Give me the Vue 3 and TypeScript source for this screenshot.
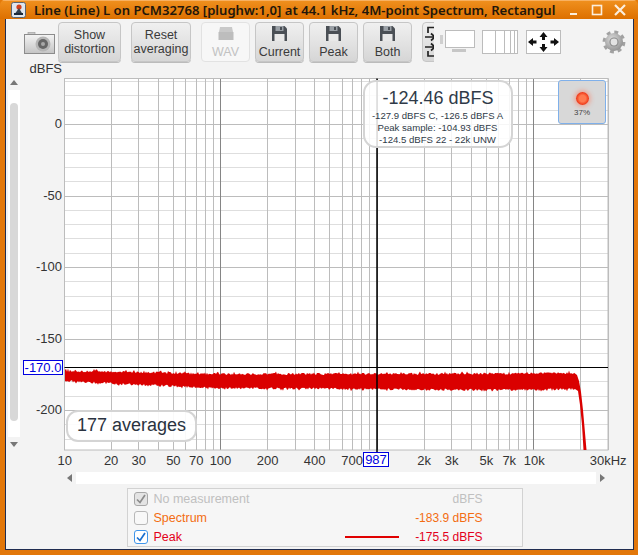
<script setup lang="ts">
const PLOT = { left: 64.5, right: 608, top: 78.5, bottom: 450 }
const X0 = 64
const DEC = 156.5
const Y0 = 124
const PXDB = 1.43
const OFF_X = 6
const OFF_Y = 62

const fx = (f: number) => X0 + DEC * Math.log10(f / 10) - OFF_X
const fy = (db: number) => Y0 - db * PXDB - OFF_Y

const vLines: { x: number; major: boolean }[] = []
for (const d of [10, 100, 1000, 10000]) {
  for (let m = 1; m < 10; m++) {
    const f = d * m
    if (f > 30000 || f === 10) continue
    vLines.push({ x: Math.floor(fx(f)) + 0.5, major: m === 1 })
  }
}
const hLines: { y: number; major: boolean }[] = []
for (let db = 30; db >= -220; db -= 10) {
  hLines.push({ y: Math.round(fy(db)) + 0.5, major: db % 50 === 0 })
}
const yLabels = [0, -50, -100, -150, -200].map((v) => ({ v: String(v), y: fy(v) + 4 }))
const xLabels = [
  ['10', 10.1], ['20', 20], ['30', 30], ['50', 50], ['70', 70], ['100', 100], ['200', 200],
  ['400', 400], ['700', 693], ['2k', 2000], ['3k', 3000], ['5k', 5000], ['7k', 7000],
  ['10k', 10100], ['30kHz', 30000],
].map(([t, f]) => ({ t: t as string, x: fx(f as number) }))

const plotX = PLOT.left - OFF_X
const plotY = PLOT.top - OFF_Y
const plotW = PLOT.right - PLOT.left
const plotH = PLOT.bottom - PLOT.top

let seed = 12345
const rnd = () => {
  seed = (seed * 1664525 + 1013904223) >>> 0
  return seed / 4294967296
}
const lerp = (pts: number[][], x: number) => {
  for (let i = 1; i < pts.length; i++) {
    if (x <= pts[i][0]) {
      const t = (x - pts[i - 1][0]) / (pts[i][0] - pts[i - 1][0])
      return pts[i - 1][1] + t * (pts[i][1] - pts[i - 1][1])
    }
  }
  return pts[pts.length - 1][1]
}
const topCurve = [[65, 371], [120, 372], [220, 374], [376, 374], [500, 373.5], [575, 373]]
const botCurve = [[65, 381], [120, 384], [220, 388], [376, 389], [500, 390], [577, 389]]
const up: string[] = []
const down: string[] = []
for (let x = 65; x <= 575; x += 1) {
  const spike = rnd() > 0.9 ? 1.5 : 0
  up.push(`${x - OFF_X},${(lerp(topCurve, x) + rnd() * 2.2 - 1.1 - spike - OFF_Y).toFixed(1)}`)
  const dip = rnd() > 0.9 ? 1.3 : 0
  down.push(`${x - OFF_X},${(lerp(botCurve, x) + rnd() * 2.2 - 1.1 + dip - OFF_Y).toFixed(1)}`)
}
const fall = [[577, 375], [579, 381], [581, 392], [583, 410], [586.5, 450], [583.5, 450], [582, 425], [580, 405], [578, 391]]
  .map(([x, y]) => `${x - OFF_X},${y - OFF_Y}`)
const trace = [...up, ...fall, ...down.reverse()].join(' ')

const cursorX = 377 - OFF_X
const cursorY = 367.5 - OFF_Y

const legend = [
  { name: 'No measurement', value: 'dBFS', cls: 'muted', box: 'box-gray', check: true, line: false },
  { name: 'Spectrum', value: '-183.9 dBFS', cls: 'orange', box: 'box-empty', check: false, line: false },
  { name: 'Peak', value: '-175.5 dBFS', cls: 'red', box: 'box-blue', check: true, line: true },
]
const saves = ['Current', 'Peak', 'Both']
</script>

<template>
  <div class="window">
    <header class="titlebar">
      <svg class="app-icon" width="15" height="16" viewBox="0 0 15 16">
        <rect x="0.5" y="0.5" width="14" height="15" rx="2" fill="#dfe6ee" stroke="#5b6470" />
        <circle cx="8" cy="5" r="2.6" fill="#d2401e" />
        <path d="M3 13 L8 6 L12 13 Z" fill="#33404e" />
        <rect x="3" y="11" width="9" height="2" fill="#1d2a3a" />
      </svg>
      <span class="title">Line (Line) L on PCM32768 [plughw:1,0] at 44.1 kHz, 4M-point Spectrum, Rectangul</span>
      <div class="win-btns">
        <svg width="16" height="16" viewBox="0 0 16 16"><rect x="4" y="11" width="7" height="2" fill="#fbeedd" /></svg>
        <svg width="16" height="16" viewBox="0 0 16 16"><rect x="3.5" y="3.5" width="9" height="9" fill="none" stroke="#fbeedd" stroke-width="1.6" /></svg>
        <svg width="16" height="16" viewBox="0 0 16 16"><path d="M3 3 L13 13 M13 3 L3 13" stroke="#fbeedd" stroke-width="2.2" /></svg>
      </div>
    </header>

    <main class="content">
      <div class="toolbar">
        <svg class="camera" width="31" height="22" viewBox="0 0 31 22">
          <defs>
            <linearGradient id="cam" x1="0" y1="0" x2="0" y2="1">
              <stop offset="0" stop-color="#f4f4f4" />
              <stop offset="1" stop-color="#c4c4c4" />
            </linearGradient>
          </defs>
          <rect x="4" y="0.5" width="7" height="3" fill="#c8c8c8" stroke="#9a9a9a" stroke-width="0.6" />
          <rect x="0.5" y="2.5" width="30" height="19" fill="url(#cam)" stroke="#8c8c8c" />
          <circle cx="19" cy="12" r="7.5" fill="#b5b5b5" />
          <circle cx="19" cy="12" r="5" fill="#666" />
          <circle cx="19" cy="12" r="2" fill="#a8a8a8" />
        </svg>

        <div class="group">
          <button class="btn btn-show">Show<br />distortion</button>
          <button class="btn btn-reset">Reset<br />averaging</button>
        </div>

        <div class="group tight">
          <button class="btn btn-save disabled">
            <svg width="16" height="15" viewBox="0 0 16 15">
              <path d="M2 1 H14 L15 6 H1 Z" fill="#c9c9c9" />
              <rect x="0.5" y="6" width="15" height="8" fill="#bdbdbd" />
            </svg>
            <span>WAV</span>
          </button>
          <button v-for="s in saves" :key="s" class="btn btn-save">
            <svg width="15" height="15" viewBox="0 0 15 15">
              <path d="M0 0 H12.5 L15 2.5 V15 H0 Z" fill="#4a4f55" />
              <rect x="3.5" y="0" width="8" height="5" fill="#9aa0a6" />
              <rect x="8" y="1" width="2" height="3" fill="#4a4f55" />
              <rect x="2.5" y="8" width="10" height="7" fill="#e8e8e8" />
            </svg>
            <span>{{ s }}</span>
          </button>
        </div>

        <div class="swap-clip">
          <div class="swap-btn">
            <svg width="14" height="32" viewBox="0 0 14 32">
              <path d="M14 1.5 H4 V7 M1 11 H11 M7 7.5 L11 11 L7 14.5" fill="none" stroke="#222" stroke-width="1.7" />
              <path d="M1 21 H11 M7 17.5 L11 21 L7 24.5 M4 25 V30 H14" fill="none" stroke="#222" stroke-width="1.7" />
            </svg>
          </div>
        </div>

        <svg class="monitor" width="35" height="24" viewBox="0 0 35 24">
          <rect x="0" y="5" width="3" height="9" fill="#cfcfcf" />
          <rect x="5.5" y="0.5" width="29" height="17" fill="#fff" stroke="#bcbcbc" />
          <rect x="12" y="19" width="14" height="3" fill="#c6c6c6" />
        </svg>

        <svg class="columns" width="36" height="24" viewBox="0 0 36 24">
          <rect x="0.5" y="0.5" width="35" height="23" fill="#fff" stroke="#bcbcbc" />
          <path d="M13.5 0 V24 M22.5 0 V24 M28.5 0 V24 M32.5 0 V24" stroke="#bcbcbc" />
        </svg>

        <svg class="arrows" width="35" height="24" viewBox="0 0 35 24">
          <rect x="0.5" y="0.5" width="34" height="23" fill="#fff" stroke="#bcbcbc" />
          <g fill="#111">
            <path d="M17.5 2 L21.5 7 H19 V10 H16 V7 H13.5 Z" />
            <path d="M17.5 22 L21.5 17 H19 V14 H16 V17 H13.5 Z" />
            <path d="M2 12 L7 8 V10.5 H10.5 V13.5 H7 V16 Z" />
            <path d="M33 12 L28 8 V10.5 H24.5 V13.5 H28 V16 Z" />
          </g>
        </svg>

        <svg class="gear" width="24" height="24" viewBox="0 0 24 24">
          <defs>
            <radialGradient id="gearFill" cx="0.4" cy="0.35" r="0.75">
              <stop offset="0" stop-color="#dcdcdc" />
              <stop offset="1" stop-color="#8a8a8a" />
            </radialGradient>
          </defs>
          <circle cx="12" cy="12" r="9.6" fill="none" stroke="#a2a2a2" stroke-width="3.6" stroke-dasharray="3.77 3.77" />
          <circle cx="12" cy="12" r="9" fill="url(#gearFill)" />
          <circle cx="12" cy="12" r="4.6" fill="#8d8d8d" />
          <circle cx="12" cy="12" r="3.4" fill="#e2e2e2" />
        </svg>
      </div>

      <div class="chart-row">
        <div class="vscroll">
          <span class="arrow-up"></span>
          <div class="vtrack"><div class="vthumb"></div></div>
          <span class="arrow-down"></span>
        </div>
      </div>

      <div class="chart-area">
        <svg class="chart" width="626" height="408" viewBox="0 0 626 408">
          <rect :x="plotX" :y="plotY" :width="plotW" :height="plotH" fill="#fff" />
          <line v-for="h in hLines" :key="'h' + h.y" :x1="plotX" :x2="plotX + plotW" :y1="h.y" :y2="h.y"
            :stroke="h.major ? '#bcbcbc' : '#dedede'" />
          <line v-for="v in vLines" :key="'v' + v.x" :x1="v.x" :x2="v.x" :y1="plotY" :y2="plotY + plotH"
            :stroke="v.major ? '#858585' : '#bcbcbc'" />
          <rect :x="plotX" :y="plotY" :width="plotW" :height="plotH" fill="none" stroke="#bcbcbc" />
          <polygon :points="trace" fill="#da0000" />
          <line :x1="plotX" :x2="plotX + plotW" :y1="cursorY" :y2="cursorY" stroke="#000" />
          <line :x1="cursorX" :x2="cursorX" :y1="plotY" :y2="plotY + plotH + 2" stroke="#000" stroke-width="1.5" />

          <text x="56" y="11" class="tick" text-anchor="end">dBFS</text>
          <text v-for="l in yLabels" :key="l.v" x="56" :y="l.y" class="tick" text-anchor="end">{{ l.v }}</text>
          <text v-for="l in xLabels" :key="l.t" :x="l.x" y="403" class="tick" text-anchor="middle">{{ l.t }}</text>

          <rect x="17.5" y="298.5" width="39" height="14" fill="#fff" stroke="#0000e0" />
          <text x="37" y="310" class="tick blue" text-anchor="middle">-170.0</text>
          <rect x="357.5" y="390.5" width="25" height="14" fill="#fff" stroke="#0000e0" />
          <text x="370" y="402" class="tick blue" text-anchor="middle">987</text>
        </svg>

        <div class="info-box">
          <div class="info-main">-124.46 dBFS</div>
          <div class="info-line">-127.9 dBFS C, -126.5 dBFS A</div>
          <div class="info-line">Peak sample: -104.93 dBFS</div>
          <div class="info-line">-124.5 dBFS 22 - 22k UNW</div>
        </div>

        <div class="avg-box">177 averages</div>

        <div class="led-btn">
          <span class="led"></span>
          <span class="led-text">37%</span>
        </div>
      </div>

      <div class="hscroll">
        <span class="arrow-left"></span>
        <div class="htrack"></div>
        <span class="arrow-right"></span>
      </div>

      <div class="legend">
        <div v-for="r in legend" :key="r.name" class="legend-row" :class="r.cls">
          <span class="check" :class="r.box">
            <svg v-if="r.check" width="12" height="12" viewBox="0 0 12 12">
              <path d="M2 6.5 L5 9.5 L10 2" fill="none" stroke="currentColor" stroke-width="1.7" />
            </svg>
          </span>
          <span class="legend-name">{{ r.name }}</span>
          <span class="legend-line"><i v-if="r.line"></i></span>
          <span class="legend-value">{{ r.value }}</span>
        </div>
      </div>
    </main>
  </div>
</template>

<style>
html, body { margin: 0; padding: 0; background: #e57a0a; }
</style>

<style scoped>
.window {
  width: 638px;
  height: 555px;
  box-sizing: border-box;
  display: flex;
  flex-direction: column;
  overflow: hidden;
  background: #e2770a;
  padding: 0 4px 5px 5px;
  font-family: "Liberation Sans", Arial, sans-serif;
  color: #333;
  border-radius: 5px 5px 0 0;
}
.titlebar {
  height: 19px;
  flex: none;
  display: flex;
  align-items: center;
  margin: 0 -4px 0 -5px;
  padding: 0 10px 0 11px;
  background: linear-gradient(#f0911f, #dd7000);
  box-shadow: inset 0 1px 0 #f8b161;
}
.app-icon { flex: none; margin-top: 1px; }
.title {
  margin-left: 8px;
  font-family: "Noto Sans", sans-serif;
  font-weight: 600;
  font-size: 13.1px;
  color: #22160a;
  white-space: nowrap;
  flex: 1;
  overflow: hidden;
}
.win-btns { display: flex; gap: 7px; flex: none; }
.content {
  flex: 1;
  position: relative;
  border: 1px solid #1f2c50;
  border-top: 0;
  background: #f3f3f3;
  min-height: 0;
  display: flex;
  flex-direction: column;
}
.toolbar {
  height: 43px;
  box-sizing: border-box;
  padding: 3px 0 0 18px;
  display: flex;
  align-items: flex-start;
  flex: none;
}
.camera { margin: 10px 3px 0 0; flex: none; }
.group { display: flex; gap: 10px; margin-right: 10px; }
.group.tight { gap: 5px; margin-right: 10px; }
.btn {
  height: 40px;
  box-sizing: border-box;
  border: 1px solid #c6c6c6;
  border-radius: 4px;
  background: linear-gradient(#f0f0f0, #d6d6d6);
  font: 12.5px/14px "Liberation Sans", Arial, sans-serif;
  color: #3a3a3a;
  padding: 0;
  text-align: center;
  box-shadow: 0 1px 0 #bbb;
}
.btn-show { width: 63px; }
.btn-reset { width: 60px; }
.btn-save {
  width: 49px;
  display: flex;
  flex-direction: column;
  align-items: center;
  padding-top: 3px;
  gap: 4px;
}
.btn-save.disabled {
  background: #f7f7f7;
  border-color: #e2e2e2;
  color: #c2c2c2;
  box-shadow: none;
}
.swap-clip { width: 12px; height: 41px; overflow: hidden; flex: none; }
.swap-btn {
  width: 30px;
  height: 40px;
  box-sizing: border-box;
  border: 1px solid #c6c6c6;
  border-radius: 4px;
  background: linear-gradient(#f0f0f0, #d6d6d6);
  padding-top: 3px;
  padding-left: 1px;
}
.monitor { margin: 8px 0 0 6px; flex: none; }
.columns { margin: 8px 0 0 7px; flex: none; }
.arrows { margin: 8px 0 0 8px; flex: none; }
.gear { margin: 8px 0 0 41px; flex: none; }

.chart-row {
  position: absolute;
  left: 2px;
  top: 43px;
}
.vscroll {
  width: 12px;
  height: 392px;
  display: flex;
  flex-direction: column;
  align-items: center;
  position: relative;
}
.arrow-up, .arrow-down, .arrow-left, .arrow-right { width: 0; height: 0; border-style: solid; border-color: transparent; flex: none; }
.arrow-up { border-width: 0 4px 5px; border-bottom-color: #777; margin-top: 18px; }
.arrow-down { border-width: 5px 4px 0; border-top-color: #777; margin-top: 5px; }
.vtrack {
  margin-top: 5px;
  width: 12px;
  height: 347px;
  background: #fff;
  flex: none;
  box-sizing: border-box;
  padding-top: 13px;
}
.vthumb {
  width: 8px;
  height: 318px;
  margin-left: 2px;
  background: #d8d8d8;
  border-radius: 4px;
}

.chart-area {
  height: 408px;
  width: 626px;
  position: relative;
  flex: none;
}
.chart { display: block; }
.tick { font: 13px "Liberation Sans", Arial, sans-serif; fill: #333; }
.tick.blue { fill: #0000e0; }

.info-box {
  position: absolute;
  left: 357px;
  top: 18px;
  width: 150px;
  height: 68px;
  box-sizing: border-box;
  border: 2.5px solid #d4d4d4;
  border-radius: 13px;
  background: rgba(255, 255, 255, 0.86);
  text-align: center;
  padding-top: 4px;
  color: #2f3a48;
}
.info-main { font-size: 18px; line-height: 24px; }
.info-line { font-size: 9.6px; line-height: 12px; margin-left: -1px; }

.avg-box {
  position: absolute;
  left: 60px;
  top: 348px;
  width: 131px;
  height: 32px;
  box-sizing: border-box;
  border: 2.5px solid #d4d4d4;
  border-radius: 12px;
  background: rgba(255, 255, 255, 0.9);
  font-size: 18px;
  line-height: 27px;
  text-align: center;
  color: #2a3340;
}

.led-btn {
  position: absolute;
  left: 552px;
  top: 18px;
  width: 48px;
  height: 44px;
  box-sizing: border-box;
  border: 1.5px solid #7fb0ea;
  border-radius: 3px;
  background: #d8d8d8;
  display: flex;
  flex-direction: column;
  align-items: center;
  padding-top: 11px;
}
.led {
  width: 13px;
  height: 13px;
  border-radius: 50%;
  background: radial-gradient(circle at 50% 50%, #ff7a50 0 35%, #ee3212 70%, #8e1c04 100%);
  box-shadow: 0 0 4px 2px rgba(255, 110, 80, 0.45);
}
.led-text { font-size: 8px; line-height: 10px; margin-top: 3px; color: #444; }

.hscroll {
  height: 12px;
  display: flex;
  align-items: center;
  flex: none;
  margin-top: 2px;
  padding-left: 61px;
}
.arrow-left { border-width: 4px 5px 4px 0; border-right-color: #777; }
.arrow-right { border-width: 4px 0 4px 5px; border-left-color: #777; margin-left: 4px; }
.htrack { width: 520px; height: 12px; background: #fff; margin-left: 4px; flex: none; }

.legend {
  width: 396px;
  height: 59px;
  box-sizing: border-box;
  margin: 4px 0 0 120.5px;
  border: 1px solid #d2d2d2;
  background: #f6f6f6;
  flex: none;
}
.legend-row {
  height: 19px;
  display: grid;
  grid-template-columns: 14px 197px 54px 84px;
  align-items: center;
  padding-left: 6px;
  font-size: 12.5px;
}
.legend-name { padding-left: 6px; }
.legend-value { text-align: right; font-size: 12px; }
.legend-line i { display: block; height: 2px; background: #e00000; }
.check {
  width: 14px;
  height: 14px;
  box-sizing: border-box;
  border: 1px solid #b8b8b8;
  border-radius: 3px;
  background: #f8f8f8;
  display: flex;
  align-items: center;
  justify-content: center;
}
.box-gray { border: 1.5px solid #a8a8a8; background: #e4e4e4; color: #8c8c8c; }
.box-blue { border: 1.5px solid #3f95ea; background: #fff; color: #1a6fd0; }
.muted { color: #c0c0c0; }
.orange { color: #f36d12; }
.red { color: #e3001a; }
</style>
